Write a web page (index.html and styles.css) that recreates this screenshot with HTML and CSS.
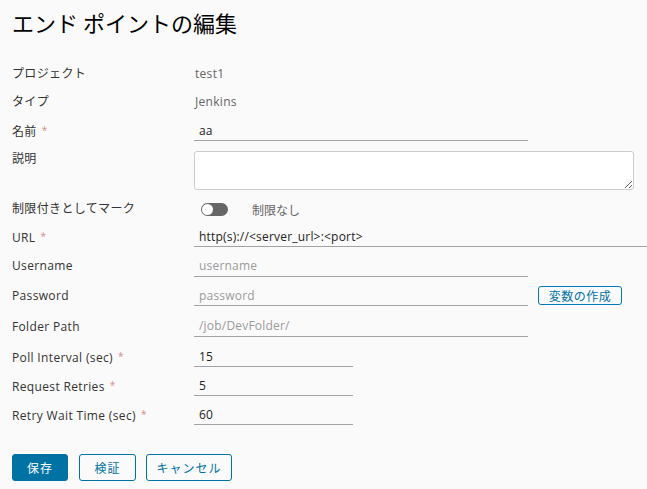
FILE: index.html
```html
<!DOCTYPE html>
<html lang="ja">
<head>
<meta charset="utf-8">
<link rel="stylesheet" href="styles.css">
</head>
<body>
<div class="page">
  <h1 class="title">エンド ポイントの編集</h1>
  <form class="form">
    <div class="row r1"><span class="label">プロジェクト</span><span class="value">test1</span></div>
    <div class="row r2"><span class="label">タイプ</span><span class="value">Jenkins</span></div>
    <div class="row r3"><span class="label">名前<i class="req">*</i></span><input class="input w-md" value="aa"></div>
    <div class="row row-ta"><span class="label">説明</span><textarea class="textarea"></textarea></div>
    <div class="row r5"><span class="label">制限付きとしてマーク</span>
      <div class="toggle-wrap"><span class="toggle"><span class="knob"></span></span><span class="toggle-text">制限なし</span></div>
    </div>
    <div class="row r6"><span class="label">URL<i class="req">*</i></span><input class="input w-lg" value="http(s)://&lt;server_url&gt;:&lt;port&gt;"></div>
    <div class="row r7"><span class="label">Username</span><input class="input w-md" placeholder="username"></div>
    <div class="row r8"><span class="label">Password</span>
      <div class="pw"><input class="input w-md" placeholder="password"><button type="button" class="btn-sm">変数の作成</button></div>
    </div>
    <div class="row r9"><span class="label">Folder Path</span><input class="input w-md" placeholder="/job/DevFolder/"></div>
    <div class="row r10"><span class="label">Poll Interval (sec)<i class="req">*</i></span><input class="input w-sm" value="15"></div>
    <div class="row r11"><span class="label">Request Retries<i class="req">*</i></span><input class="input w-sm" value="5"></div>
    <div class="row r12"><span class="label">Retry Wait Time (sec)<i class="req">*</i></span><input class="input w-sm" value="60"></div>
    <div class="actions">
      <button type="button" class="btn btn-primary b-save">保存</button>
      <button type="button" class="btn btn-outline b-verify">検証</button>
      <button type="button" class="btn btn-outline b-cancel">キャンセル</button>
    </div>
  </form>
</div>
</body>
</html>
```
FILE: styles.css
```css
html, body {
  margin: 0;
  padding: 0;
  background: #fafafa;
  overflow: hidden;
}
body {
  font-family: "Open Sans", "Noto Sans CJK JP", sans-serif;
  color: #333;
  font-size: 12px;
}
.page {
  padding: 0 0 0 12px;
}
.title {
  margin: 6px 0 0;
  font-size: 22px;
  line-height: 32px;
  font-weight: 400;
  color: #000;
  font-family: "Noto Sans CJK JP", sans-serif;
}
.form {
  margin-top: 22px;
  display: flex;
  flex-direction: column;
}
.row {
  display: grid;
  grid-template-columns: 182px 1fr;
  align-items: center;
  height: 29px;
}
.r1 { height: 27px; }
.r5 { height: 27px; }
.r7 { height: 30px; }
.r9 { height: 32px; }
.label {
  line-height: 14px;
  color: #333;
  letter-spacing: 0.35px;
}
.r9 .label { margin-top: 2px; }
.req {
  font-style: normal;
  color: #d78a8a;
  font-size: 10px;
  margin-left: 5px;
  vertical-align: 2px;
}
.value {
  color: #666;
  padding-left: 1px;
  letter-spacing: 0.3px;
}
.input {
  box-sizing: border-box;
  height: 21px;
  border: none;
  border-bottom: 1px solid #a3a3a3;
  background: transparent;
  padding: 0 5px;
  font-family: "Open Sans", "Noto Sans CJK JP", sans-serif;
  font-size: 12px;
  letter-spacing: 0.2px;
  color: #222;
  outline: none;
}
.input::placeholder { color: #9a9a9a; }
.w-md { width: 334px; }
.w-lg { width: 453px; }
.w-sm { width: 159px; }
.row-ta {
  height: 50px;
  align-items: start;
  padding-top: 6px;
  box-sizing: border-box;
}
.row-ta .label { line-height: 14px; padding-top: 1px; }
.textarea {
  box-sizing: border-box;
  width: 440px;
  height: 39px;
  border: 1px solid #ccc;
  border-radius: 3px;
  background: #fff;
  resize: both;
  margin: 0;
}
.toggle-wrap {
  display: flex;
  align-items: center;
  padding-left: 7px;
  margin-top: 2px;
}
.toggle {
  box-sizing: border-box;
  width: 27px;
  height: 13px;
  border-radius: 7px;
  background: #666;
  display: flex;
  align-items: center;
  padding-left: 1px;
}
.knob {
  width: 11px;
  height: 11px;
  border-radius: 50%;
  background: #fff;
}
.toggle-text {
  margin-left: 24px;
  color: #666;
  font-family: "Noto Sans CJK JP", sans-serif;
}
.pw {
  display: flex;
  align-items: center;
}
.btn-sm {
  box-sizing: border-box;
  margin-left: 10px;
  width: 84px;
  height: 19px;
  border: 1px solid #0079b8;
  border-radius: 3px;
  background: transparent;
  color: #0072a3;
  font-family: "Noto Sans CJK JP", sans-serif;
  font-size: 12px;
  letter-spacing: 0.5px;
  padding: 0;
  line-height: 17px;
}
.actions {
  display: flex;
  margin-top: 25px;
  gap: 10px;
}
.btn {
  box-sizing: border-box;
  height: 27px;
  border-radius: 3px;
  font-family: "Noto Sans CJK JP", sans-serif;
  font-size: 12px;
  letter-spacing: 1px;
  padding: 0;
}
.btn-primary {
  background: #0072a3;
  border: 1px solid #0072a3;
  color: #fff;
}
.btn-outline {
  background: transparent;
  border: 1px solid #0072a3;
  color: #0072a3;
}
.b-save { width: 56px; }
.b-verify { width: 57px; margin-left: 1px; }
.b-cancel { width: 86px; }
```
